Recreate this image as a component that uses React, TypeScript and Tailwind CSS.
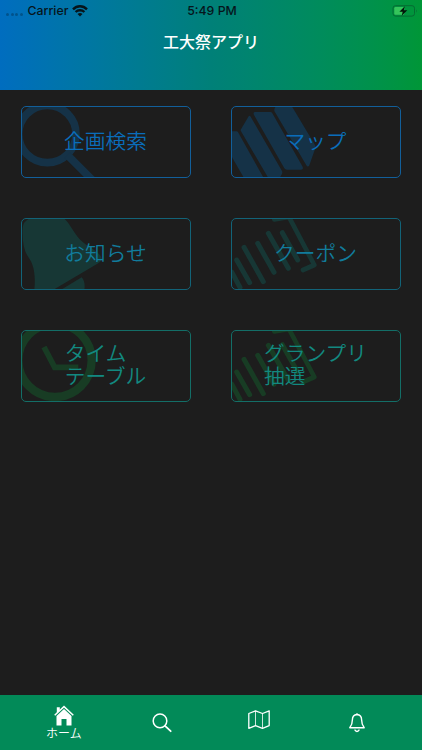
import type { ReactNode } from "react";

type MenuCard = {
  label: string;
  tone: string;
  artTone: string;
  viewBox: string;
  art: ReactNode;
};

const couponArt = (
  <g fill="none" stroke="currentColor" strokeWidth={15} strokeLinecap="round" strokeLinejoin="round">
    <path d="M30 192 55 238M45 156 84 224M67 118 125 221M108 106 157 193M140 76 200 181M182 74 228 156" />
    <path d="M158 34 202 27 278 171 244 186" strokeWidth={14} />
  </g>
);

const CARDS: MenuCard[] = [
  {
    label: "企画検索",
    tone: "border-[#125f9a] text-[#0a6dba]",
    artTone: "text-[#153247]",
    viewBox: "32 33 510 216",
    art: (
      <g fill="none" stroke="currentColor" strokeWidth={23}>
        <circle cx={111} cy={117} r={86} />
        <path d="M171 180 248 257" />
      </g>
    ),
  },
  {
    label: "マップ",
    tone: "border-[#125f9a] text-[#0a6dba]",
    artTone: "text-[#153247]",
    viewBox: "28 33 510 216",
    art: (
      <g fill="currentColor">
        <path d="M20 109H44Q48 109 50 113L126 249H67L20 168Z" />
        <path d="M58 103 81 64Q84 60 87 65L181 228Q183 232 181 236L174 249H140L58 109Q56 106 58 103Z" />
        <path d="M101 51H146Q150 51 152 55L242 214Q247 224 238 224H196Q191 224 188 220L97 60Q93 51 101 51Z" />
        <path d="M158 42 165 28H207L280 150Q283 155 281 160L263 211Q259 218 254 211L158 48Z" />
      </g>
    ),
  },
  {
    label: "お知らせ",
    tone: "border-[#126378] text-[#117c9c]",
    artTone: "text-[#173735]",
    viewBox: "32 30 510 216",
    art: (
      <g fill="currentColor">
        <path d="M37 60Q38 38 62 30H160C184 52 193 83 218 103C241 121 269 133 274 151Q275 159 265 165L128 246H72C76 206 72 171 54 147Q34 120 37 60Z" />
        <path d="M151 246 214 208Q226 221 222 246Z" />
      </g>
    ),
  },
  {
    label: "クーポン",
    tone: "border-[#126378] text-[#117c9c]",
    artTone: "text-[#173735]",
    viewBox: "28 30 510 216",
    art: couponArt,
  },
  {
    label: "タイム\nテーブル",
    tone: "border-[#136e67] text-[#128980]",
    artTone: "text-[#183c24]",
    viewBox: "32 30 510 216",
    art: (
      <g fill="none" stroke="currentColor">
        <circle cx={134} cy={121} r={110} strokeWidth={25} />
        <path d="M101 81 133 142H204" strokeWidth={17} />
      </g>
    ),
  },
  {
    label: "グランプリ\n抽選",
    tone: "border-[#136e67] text-[#128980]",
    artTone: "text-[#183c24]",
    viewBox: "28 30 510 216",
    art: couponArt,
  },
];

function StatusBar() {
  return (
    <div className="grid h-5 grid-cols-3 items-center pl-1.5 pr-1 pt-0.5 text-[12.3px] font-medium text-[#06151b]">
      <div className="flex items-center">
        <div className="flex gap-[1.5px] pt-1.5">
          {[0, 1, 2, 3].map((dot) => (
            <span key={dot} className="size-[3px] rounded-full bg-black/25" />
          ))}
        </div>
        <span className="ml-[5px]">Carrier</span>
        <svg className="ml-1 h-3 w-4" viewBox="0 0 16 12" fill="none" stroke="currentColor" strokeWidth={2.4}>
          <path d="M1 4.3C5 .2 11 .2 15 4.3M3.6 7C6 4.6 10 4.6 12.4 7" />
          <path d="M8 11.5 5.5 9Q8 7 10.5 9Z" fill="currentColor" stroke="none" />
        </svg>
      </div>
      <span className="text-center">5:49 PM</span>
      <svg className="h-3 w-[26px] justify-self-end" viewBox="0 0 26 12" fill="none">
        <rect x={1} y={0.7} width={21.5} height={10.4} rx={2.5} stroke="#056b32" />
        <rect x={2.3} y={2} width={10} height={7.8} rx={1.2} fill="#35c45b" />
        <path d="M24 4.2Q25.4 6 24 7.8Z" fill="#056b32" />
        <path d="M12.8 1.2 7.4 6.7H10.7L9.7 10.7 15.3 5.2H11.8Z" fill="#03150a" />
      </svg>
    </div>
  );
}

function HomeIcon() {
  return (
    <svg className="h-[21px] w-5" viewBox="0 0 20 21" fill="none">
      <path d="M.7 10.3 10 1.6l9.3 8.7" stroke="white" strokeWidth={1.5} />
      <path d="M2.8 2.2h3v3.2l-3 2.8Z" fill="white" />
      <path d="m10 4.1 7.5 7V20.5H12.5V14H7.5v6.5H2.5V11.1Z" fill="white" />
    </svg>
  );
}

function TabBar() {
  return (
    <nav className="flex h-[55px] bg-[#028a58] pl-[15px] pr-[16px] text-white">
      <div className="flex flex-1 flex-col items-center pt-2.5">
        <HomeIcon />
        <span className="mt-0.5 text-xs font-[350] leading-3">ホーム</span>
      </div>
      <div className="flex flex-1 justify-center pt-[18px]">
        <svg className="size-5" viewBox="0 0 20 20" fill="none" stroke="white" strokeWidth={1.5} strokeLinecap="round">
          <circle cx={8} cy={7.9} r={6.8} />
          <path d="m13 12.9 5.7 5.3" strokeWidth={1.8} />
        </svg>
      </div>
      <div className="flex flex-1 justify-center pt-[15px]">
        <svg className="h-5 w-[22px]" viewBox="0 0 22 20" fill="none" stroke="white" strokeLinejoin="round">
          <path d="M.8 3.5 7.5.8l7 2.7L21.2.8v14.8l-6.7 2.7-7-2.7-6.7 2.7Z" strokeWidth={1.3} />
          <path d="M7.5.8v14.8m7-12.1v14.8" strokeWidth={0.8} />
        </svg>
      </div>
      <div className="flex flex-1 justify-center pt-[18px]">
        <svg className="h-5 w-4" viewBox="0 0 16 20" fill="none" stroke="white" strokeWidth={1.4} strokeLinecap="round" strokeLinejoin="round">
          <path d="M8 1.2V.8M8 1.5C4.8 1.8 3.4 4 3.4 6.8 3.4 11 2.5 12.7.8 14.8H15.2C13.5 12.7 12.6 11 12.6 6.8 12.6 4 11.2 1.8 8 1.5Z" />
          <path d="M6 17.1Q8 19.9 10 17.1" />
        </svg>
      </div>
    </nav>
  );
}

export default function App() {
  return (
    <div className="flex h-screen w-full flex-col bg-[#1d1d1d] font-['Inter','Noto_Sans_CJK_JP',sans-serif]">
      <header className="h-[90px] bg-linear-to-r from-[#006dbf] via-[#008078] to-[#009637]">
        <StatusBar />
        <h1 className="pt-2.5 text-center text-base font-medium leading-6 text-white">工大祭アプリ</h1>
      </header>

      <main className="grid flex-1 auto-rows-[72px] grid-cols-[170px_170px] content-start gap-10 pl-[21px] pt-4">
        {CARDS.map((card) => (
          <button
            key={card.label}
            className={`relative flex items-center justify-center overflow-hidden rounded-[5px] border pb-0.5 pr-px ${card.tone}`}
          >
            <svg className={`absolute -left-px -top-px h-[72px] w-[170px] ${card.artTone}`} viewBox={card.viewBox}>
              {card.art}
            </svg>
            <span className="relative whitespace-pre text-left text-[20.7px] font-[350] leading-[23px]">
              {card.label}
            </span>
          </button>
        ))}
      </main>

      <TabBar />
    </div>
  );
}
